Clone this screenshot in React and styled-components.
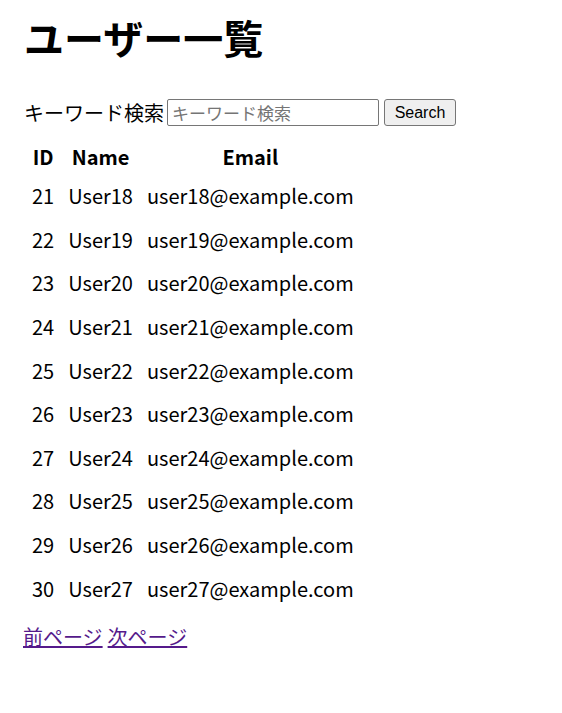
import React, { useState } from 'react'
import styled, { createGlobalStyle } from 'styled-components'

const GlobalStyle = createGlobalStyle`
  body {
    margin: 0;
    background: #fff;
    color: #000;
    font-family: "Noto Sans CJK JP", "Noto Sans", sans-serif;
    font-size: 20px;
  }
`

const Page = styled.div`
  padding: 8px 24px;
`

const Title = styled.h1`
  font-size: 40px;
  font-weight: bold;
  margin: 0 0 32px;
`

const SearchRow = styled.div`
  display: flex;
  align-items: center;
  gap: 3px;
`

const SearchInput = styled.input`
  width: 212px;
  height: 27px;
  box-sizing: border-box;
  font-family: "Noto Sans CJK JP", sans-serif;
  font-size: 17px;
  padding: 0 4px;
  border: 1px solid #767676;
  border-radius: 2px;
  &::placeholder {
    color: #757575;
  }
`

const Button = styled.button`
  height: 27px;
  width: 72px;
  margin-left: 2px;
  font-family: "Liberation Sans", Arial, sans-serif;
  font-size: 16px;
  background: #efefef;
  border: 1px solid #767676;
  border-radius: 3px;
  padding: 0 6px;
`

const Table = styled.table`
  border-collapse: collapse;
  margin-top: 11px;
  margin-left: 1px;
`

const Th = styled.th`
  padding: 3.5px 7px;
  font-weight: bold;
  text-align: center;
`

const Td = styled.td`
  padding: 7.3px 7px;
`

const Pager = styled.div`
  margin-top: 12px;
  margin-left: -1px;
  display: flex;
  gap: 5px;
`

const PageLink = styled.a`
  color: #551a8b;
  text-decoration: underline;
  cursor: pointer;
`

const users = Array.from({ length: 10 }, (_, i) => ({
  id: 21 + i,
  name: `User${18 + i}`,
  email: `user${18 + i}@example.com`,
}))

export default function App() {
  const [keyword, setKeyword] = useState('')

  return (
    <Page>
      <GlobalStyle />
      <Title>ユーザー一覧</Title>
      <SearchRow>
        <span>キーワード検索</span>
        <SearchInput
          placeholder="キーワード検索"
          value={keyword}
          onChange={e => setKeyword(e.target.value)}
        />
        <Button>Search</Button>
      </SearchRow>
      <Table>
        <thead>
          <tr>
            <Th>ID</Th>
            <Th>Name</Th>
            <Th>Email</Th>
          </tr>
        </thead>
        <tbody>
          {users.map(u => (
            <tr key={u.id}>
              <Td>{u.id}</Td>
              <Td>{u.name}</Td>
              <Td>{u.email}</Td>
            </tr>
          ))}
        </tbody>
      </Table>
      <Pager>
        <PageLink href="#">前ページ</PageLink>
        <PageLink href="#">次ページ</PageLink>
      </Pager>
    </Page>
  )
}
